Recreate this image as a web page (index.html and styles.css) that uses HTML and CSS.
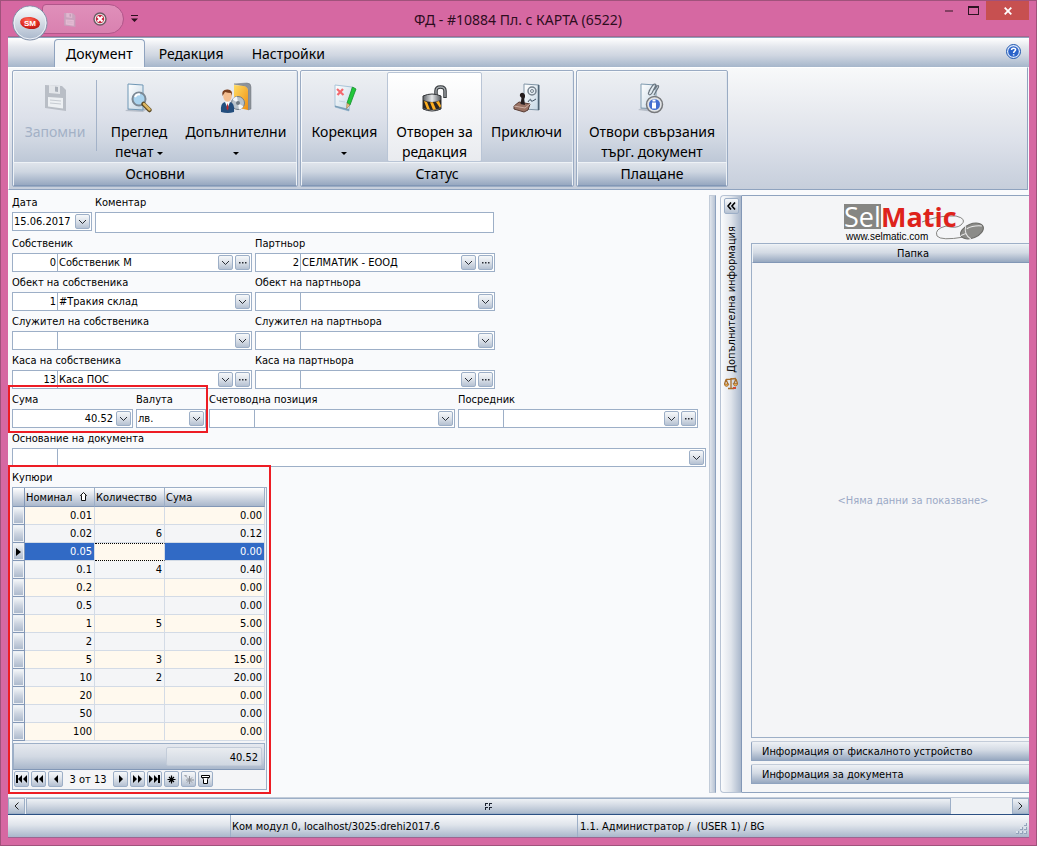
FILE: index.html
```
<!DOCTYPE html>
<html lang="bg">
<head>
  <meta charset="UTF-8">
  <meta name="viewport" content="width=device-width, initial-scale=1.0">
  <title>ФД - #10884 Пл. с КАРТА (6522)</title>
  <link rel="stylesheet" href="styles.css">
</head>
<body>

<!-- Shared symbols -->
<svg class="defs" aria-hidden="true">
  <defs>
    <linearGradient id="gSteel" x1="0" y1="0" x2="0" y2="1">
      <stop offset="0" stop-color="#fdfefe"/><stop offset="1" stop-color="#a9b7cb"/>
    </linearGradient>
    <linearGradient id="gPage" x1="0" y1="0" x2="1" y2="1">
      <stop offset="0" stop-color="#ffffff"/><stop offset="1" stop-color="#c3d6e4"/>
    </linearGradient>
    <linearGradient id="gDoor" x1="0" y1="0" x2="1" y2="1">
      <stop offset="0" stop-color="#ffdc62"/><stop offset="1" stop-color="#ee8f12"/>
    </linearGradient>
    <linearGradient id="gMetal" x1="0" y1="0" x2="1" y2="0">
      <stop offset="0" stop-color="#5c6064"/><stop offset="0.5" stop-color="#e6e8ea"/><stop offset="1" stop-color="#54585c"/>
    </linearGradient>
    <radialGradient id="gRed" cx="0.4" cy="0.3" r="0.8">
      <stop offset="0" stop-color="#ff6a5a"/><stop offset="0.6" stop-color="#e02a20"/><stop offset="1" stop-color="#a81410"/>
    </radialGradient>
    <symbol id="down" viewBox="0 0 9 6">
      <path d="M1 1 L4.500 4.500 L8 1" fill="none" stroke="#2a2e36" stroke-width="1"/>
    </symbol>
    <symbol id="dots" viewBox="0 0 8 2">
      <path d="M0 0h1.500v1.500h-1.500zM3 0h1.500v1.500h-1.500zM6 0h1.500v1.500h-1.500z" fill="#2a2e36"/>
    </symbol>
    <symbol id="floppy" viewBox="0 0 24 28">
      <path d="M2 2 L19 3 L23 7 V28 L2 25 Z" fill="#b9bec6"/>
      <path d="M6 2 L17 3 V11 L6 10 Z" fill="#e3e6ea"/>
      <path d="M12 3.500 L15 4 V9 L12 8.600 Z" fill="#aab0b9"/>
      <path d="M5 14 L20 15 V25.500 L5 23.500 Z" fill="#edf0f3"/>
      <path d="M7 17 L18 18 M7 20 L18 21" stroke="#c6cbd2" fill="none"/>
    </symbol>
  </defs>
</svg>

<header class="titlebar">
  <button class="app-button" aria-label="Меню">
    <svg width="36" height="36" viewBox="0 0 36 36">
      <circle cx="18" cy="18" r="17" fill="url(#gSteel)" stroke="#7f8da6"/>
      <circle cx="18" cy="18" r="16" fill="none" stroke="#eef2f8"/>
      <ellipse cx="18" cy="18" rx="10" ry="6" fill="url(#gRed)" transform="rotate(8 18 18)"/>
      <text x="18" y="21" class="app-text">SM</text>
    </svg>
  </button>
  <div class="quick">
    <button aria-label="Запомни"><svg width="13" height="15" class="faded"><use href="#floppy"/></svg></button>
    <button aria-label="Затвори документа">
      <svg width="14" height="14" viewBox="0 0 14 14">
        <circle cx="7" cy="7" r="6" fill="#e9e9e9" stroke="#6d5a64" stroke-width="1.400"/>
        <circle cx="7" cy="7" r="4.200" fill="#c92440"/>
        <path d="M4.500 4.500 L9.500 9.500 M9.500 4.500 L4.500 9.500" stroke="#fff" stroke-width="2"/>
      </svg>
    </button>
  </div>
  <button class="quick-more" aria-label="Още">
    <svg width="7" height="7" viewBox="0 0 7 7"><path d="M0 0h7v1H0zM0 3.500h7L3.500 7z" fill="#2c0f1e"/></svg>
  </button>
  <h1 class="title">ФД - #10884 Пл. с КАРТА (6522)</h1>
  <div class="window-buttons">
    <button aria-label="Минимизирай"><svg width="8" height="2"><path d="M0 0h8v2H0z" fill="#833f62"/></svg></button>
    <button aria-label="Максимизирай"><svg width="11" height="9" viewBox="0 0 11 9"><path d="M0 0h11v9H0zM1 2v6h9V2z" fill-rule="evenodd" fill="#2d1522"/></svg></button>
    <button class="close" aria-label="Затвори"><svg width="8" height="8" viewBox="0 0 8 8"><path d="M0.700 0.700 L7.300 7.300 M7.300 0.700 L0.700 7.300" stroke="#fff" stroke-width="1.800"/></svg></button>
  </div>
</header>

<main class="window">
  <nav class="tabs">
    <button class="tab active">Документ</button>
    <button class="tab">Редакция</button>
    <button class="tab">Настройки</button>
    <button class="help" aria-label="Помощ">
      <svg width="15" height="15" viewBox="0 0 15 15">
        <circle cx="7.500" cy="7.500" r="7" fill="#dce8fb" stroke="#1f56ae"/>
        <circle cx="7.500" cy="7.500" r="5.300" fill="#2b63c9"/>
        <path d="M5.500 6 C5.500 3.500 9.700 3.600 9.600 5.800 C9.500 7.200 7.600 7.200 7.600 9 M7.600 10.200 V11.500" fill="none" stroke="#fff" stroke-width="1.500"/>
      </svg>
    </button>
  </nav>

  <section class="ribbon">
    <div class="group group-main">
      <div class="group-body">
        <button class="tool save" disabled>
          <svg width="32" height="32" viewBox="0 0 32 32"><use href="#floppy" x="4" y="1" width="24" height="28"/></svg>
          <span>Запомни</span>
        </button>
        <div class="divider"></div>
        <button class="tool preview">
          <svg width="32" height="32" viewBox="0 0 32 32">
            <path d="M2 29 L8 25 L24 27 L20 30 Z" fill="#8b97a5" opacity="0.5"/>
            <path d="M5 2 L20 3 V28 L5 27 Z" fill="url(#gPage)" stroke="#6f97b5"/>
            <circle cx="16" cy="17" r="6.500" fill="#a9d3ee" stroke="#7b8894" stroke-width="2"/>
            <path d="M12 15 A4.500 4.500 0 0 1 17 12.500" fill="none" stroke="#fff" stroke-width="2"/>
            <path d="M20.500 22 L26.500 28" stroke="#5b4a25" stroke-width="4.500" stroke-linecap="round"/>
            <path d="M21 22 L26.500 27.500" stroke="#dcb660" stroke-width="2.500" stroke-linecap="round"/>
          </svg>
          <span>Преглед<br>печат <i class="caret"></i></span>
        </button>
        <button class="tool extra">
          <svg width="32" height="32" viewBox="0 0 32 32">
            <path d="M14 2 L27 1 Q31 1 31 5 V27 L28 28 V8 Q27 4 23 4 Z" fill="#8c9299" stroke="#70757c" stroke-width="0.500"/>
            <path d="M14 3 L24 4 Q28 5 28 9 V28 L14 25 Z" fill="url(#gDoor)"/>
            <circle cx="18" cy="21" r="6.500" fill="#b9c3cb" stroke="#707b85"/>
            <path d="M18 21 L12.500 17.500 A6.500 6.500 0 0 1 17 14.500 Z M18 21 L23.500 24.500 A6.500 6.500 0 0 1 19 27.500 Z" fill="#f4f7f9"/>
            <circle cx="18" cy="21" r="2" fill="#6f7a84"/>
            <path d="M1 30 Q0 21 5 20 L10 20 Q15 21 14 30 Q8 32 1 30 Z" fill="#234e7d"/>
            <path d="M5 20 L7.500 26 L10 20 Z" fill="#fff"/>
            <path d="M7.500 21 L8.700 26 L7.500 28.500 L6.400 26 Z" fill="#c22628"/>
            <ellipse cx="7.500" cy="14" rx="4.300" ry="5.800" fill="#f3be91"/>
            <path d="M2.500 14 Q1 7.500 7 7.500 Q13 7 12 14 L11 11 Q8 11 5 10 Z" fill="#7a4020"/>
          </svg>
          <span>Допълнителни<br><i class="caret"></i></span>
        </button>
      </div>
      <div class="group-title">Основни</div>
    </div>

    <div class="group group-status">
      <div class="group-body">
        <button class="tool fix">
          <svg width="32" height="32" viewBox="0 0 32 32">
            <path d="M6 3 L23 5 L20 29 L6 25 Z" fill="url(#gPage)" stroke="#a9c4d8"/>
            <path d="M6 25 L20 29 L20 27 L6 23.500 Z" fill="#7b9eb8"/>
            <path d="M8 7 L14.500 13 M14 7 L8.500 13" stroke="#f4696e" stroke-width="2.200"/>
            <path d="M10 19 l6 1" stroke="#c3d4e0"/>
            <path d="M23.500 5 L27 7 L21 23 L18 21 Z" fill="#22c83a" stroke="#119128" stroke-width="0.800"/>
            <path d="M18 21 L21 23 L17.500 26.500 Z" fill="#e6bd80" stroke="#8b6a35" stroke-width="0.500"/>
          </svg>
          <span>Корекция<br><i class="caret"></i></span>
        </button>
        <button class="tool open checked">
          <svg width="32" height="32" viewBox="0 0 32 32">
            <path d="M17 15 V9 Q17 5 21.500 5 Q26 5 26 9 V16" fill="none" stroke="#34383b" stroke-width="3.500"/>
            <path d="M17 14 V9 Q17 5 21.500 5 Q26 5 26 9 V15" fill="none" stroke="#a5aaae" stroke-width="1.300"/>
            <path d="M4 14 Q13 10 22 14 V27 Q13 31 4 27 Z" fill="url(#gMetal)" stroke="#303336"/>
            <path d="M4 18 Q13 22 22 18 V26 Q13 30 4 26 Z" fill="#2b2725"/>
            <path d="M5 19 L8 20 L11 27.500 L8 27 Z M11 20.300 L14 20.300 L17 27.300 L14 27.800 Z M17 20 L20 19 L22 24 L21 26 Z" fill="#ffaf20"/>
          </svg>
          <span>Отворен за<br>редакция</span>
        </button>
        <button class="tool finish">
          <svg width="32" height="32" viewBox="0 0 32 32">
            <path d="M13 2 L28 3 V28 L13 27 Z" fill="url(#gPage)" stroke="#8095a6"/>
            <path d="M27.500 3 V28" stroke="#4f6474" stroke-width="1.500"/>
            <circle cx="21" cy="9" r="4" fill="none" stroke="#75828d" stroke-width="1.500"/>
            <circle cx="21" cy="9" r="1.500" fill="none" stroke="#75828d"/>
            <path d="M17 20 Q20 15 20 19 Q21 20 25 17" fill="none" stroke="#3f5061"/>
            <path d="M3 24 L8 20 L19 22 L17 28 L13 30 L3 27 Z" fill="#9a7365" stroke="#573b33"/>
            <path d="M3 24 L14 26 L19 22" fill="none" stroke="#ceb0a4"/>
            <path d="M9.500 22 L10.500 16 Q8 14 9 12 Q12 9 14 13 Q14.500 15 13 17 L14 23 Z" fill="#251d1e"/>
          </svg>
          <span>Приключи</span>
        </button>
      </div>
      <div class="group-title">Статус</div>
    </div>

    <div class="group group-pay">
      <div class="group-body">
        <button class="tool linked">
          <svg width="32" height="32" viewBox="0 0 32 32">
            <path d="M2 28 L8 24 L22 28 L18 30 Z" fill="#8b97a5" opacity="0.500"/>
            <path d="M5 2 L20 3 V27 L5 26 Z" fill="url(#gPage)" stroke="#7f9bb0"/>
            <path d="M13 9 L17 3 Q19 1 20 3 L16 11 Q14 14 12.500 12 Q12 11 14 8 M18 8 L21 4 Q23 3 22.500 5 L18 13" fill="none" stroke="#69747d" stroke-width="1.200"/>
            <circle cx="18.500" cy="22.500" r="8" fill="#e2e4e6" stroke="#77797c" stroke-width="1.500"/>
            <circle cx="18.500" cy="22.500" r="5.500" fill="#426ed0"/>
            <path d="M16 20.500h4v6h-4zM16.500 17.500h3v2h-3z" fill="#fff"/>
          </svg>
          <span>Отвори свързания<br>търг. документ</span>
        </button>
      </div>
      <div class="group-title">Плащане</div>
    </div>
  </section>

  <div class="workspace">
    <form class="form">
      <div class="row">
        <div class="field w-date">
          <label for="date">Дата</label>
          <div class="box"><input id="date" value="15.06.2017"><button type="button" class="mini" aria-label="Календар"><svg width="9" height="6"><use href="#down"/></svg></button></div>
        </div>
        <div class="field w-comment">
          <label for="comment">Коментар</label>
          <div class="box tall"><input id="comment"></div>
        </div>
      </div>

      <div class="row">
        <div class="field">
          <label for="owner">Собственик</label>
          <div class="box"><input id="owner" class="code" value="0"><select aria-label="Собственик име"><option>Собственик М</option></select><span class="mini drop"><svg width="9" height="6"><use href="#down"/></svg></span><button type="button" class="mini" aria-label="Избор"><svg width="8" height="2"><use href="#dots"/></svg></button></div>
        </div>
        <div class="field">
          <label for="partner">Партньор</label>
          <div class="box"><input id="partner" class="code" value="2"><select aria-label="Партньор име"><option>СЕЛМАТИК - ЕООД</option></select><span class="mini drop"><svg width="9" height="6"><use href="#down"/></svg></span><button type="button" class="mini" aria-label="Избор"><svg width="8" height="2"><use href="#dots"/></svg></button></div>
        </div>
      </div>

      <div class="row">
        <div class="field">
          <label for="ownerSite">Обект на собственика</label>
          <div class="box"><input id="ownerSite" class="code" value="1"><select aria-label="Обект"><option>#Тракия склад</option></select><span class="mini drop"><svg width="9" height="6"><use href="#down"/></svg></span></div>
        </div>
        <div class="field">
          <label for="partnerSite">Обект на партньора</label>
          <div class="box"><input id="partnerSite" class="code"><select aria-label="Обект"><option></option></select><span class="mini drop"><svg width="9" height="6"><use href="#down"/></svg></span></div>
        </div>
      </div>

      <div class="row">
        <div class="field">
          <label for="ownerEmp">Служител на собственика</label>
          <div class="box"><input id="ownerEmp" class="code"><select aria-label="Служител"><option></option></select><span class="mini drop"><svg width="9" height="6"><use href="#down"/></svg></span></div>
        </div>
        <div class="field">
          <label for="partnerEmp">Служител на партньора</label>
          <div class="box"><input id="partnerEmp" class="code"><select aria-label="Служител"><option></option></select><span class="mini drop"><svg width="9" height="6"><use href="#down"/></svg></span></div>
        </div>
      </div>

      <div class="row">
        <div class="field">
          <label for="ownerCash">Каса на собственика</label>
          <div class="box"><input id="ownerCash" class="code" value="13"><select aria-label="Каса"><option>Каса ПОС</option></select><span class="mini drop"><svg width="9" height="6"><use href="#down"/></svg></span><button type="button" class="mini" aria-label="Избор"><svg width="8" height="2"><use href="#dots"/></svg></button></div>
        </div>
        <div class="field">
          <label for="partnerCash">Каса на партньора</label>
          <div class="box"><input id="partnerCash" class="code"><select aria-label="Каса"><option></option></select><span class="mini drop"><svg width="9" height="6"><use href="#down"/></svg></span><button type="button" class="mini" aria-label="Избор"><svg width="8" height="2"><use href="#dots"/></svg></button></div>
        </div>
      </div>

      <div class="row">
        <div class="row marked">
          <div class="field w-sum">
            <label for="sum">Сума</label>
            <div class="box"><input id="sum" class="number" value="40.52"><button type="button" class="mini" aria-label="Калкулатор"><svg width="9" height="6"><use href="#down"/></svg></button></div>
          </div>
          <div class="field w-currency">
            <label for="currency">Валута</label>
            <div class="box"><select id="currency"><option>лв.</option></select><span class="mini drop"><svg width="9" height="6"><use href="#down"/></svg></span></div>
          </div>
        </div>
        <div class="field w-account">
          <label for="account">Счетоводна позиция</label>
          <div class="box"><input id="account" class="code"><select aria-label="Позиция"><option></option></select><span class="mini drop"><svg width="9" height="6"><use href="#down"/></svg></span></div>
        </div>
        <div class="field">
          <label for="agent">Посредник</label>
          <div class="box"><input id="agent" class="code"><select aria-label="Посредник име"><option></option></select><span class="mini drop"><svg width="9" height="6"><use href="#down"/></svg></span><button type="button" class="mini" aria-label="Избор"><svg width="8" height="2"><use href="#dots"/></svg></button></div>
        </div>
      </div>

      <div class="row">
        <div class="field w-full">
          <label for="reason">Основание на документа</label>
          <div class="box"><input id="reason" class="code"><select aria-label="Основание"><option></option></select><span class="mini drop"><svg width="9" height="6"><use href="#down"/></svg></span></div>
        </div>
      </div>

      <div class="notes marked">
        <div class="notes-label">Купюри</div>
        <div class="grid">
          <table>
            <thead>
              <tr>
                <th class="ind"></th>
                <th class="c-nom">Номинал <svg width="7" height="9" viewBox="0 0 7 9"><path d="M1.500 8.500V3.500H0.500L3.500 0.500L6.500 3.500H5.500V8.500Z" fill="#fff" stroke="#111"/></svg></th>
                <th class="c-qty">Количество</th>
                <th class="c-sum">Сума</th>
              </tr>
            </thead>
            <tbody>
              <tr><td class="ind"></td><td>0.01</td><td></td><td>0.00</td></tr>
              <tr><td class="ind"></td><td>0.02</td><td>6</td><td>0.12</td></tr>
              <tr class="current"><td class="ind"><svg width="5" height="8" viewBox="0 0 5 8"><path d="M0 0L5 4L0 8z"/></svg></td><td>0.05</td><td class="edit"></td><td>0.00</td></tr>
              <tr><td class="ind"></td><td>0.1</td><td>4</td><td>0.40</td></tr>
              <tr><td class="ind"></td><td>0.2</td><td></td><td>0.00</td></tr>
              <tr><td class="ind"></td><td>0.5</td><td></td><td>0.00</td></tr>
              <tr><td class="ind"></td><td>1</td><td>5</td><td>5.00</td></tr>
              <tr><td class="ind"></td><td>2</td><td></td><td>0.00</td></tr>
              <tr><td class="ind"></td><td>5</td><td>3</td><td>15.00</td></tr>
              <tr><td class="ind"></td><td>10</td><td>2</td><td>20.00</td></tr>
              <tr><td class="ind"></td><td>20</td><td></td><td>0.00</td></tr>
              <tr><td class="ind"></td><td>50</td><td></td><td>0.00</td></tr>
              <tr><td class="ind"></td><td>100</td><td></td><td>0.00</td></tr>
            </tbody>
          </table>
          <div class="total"><span>40.52</span></div>
          <div class="navigator">
            <button type="button" class="mini" aria-label="Първи"><svg width="11" height="8" viewBox="0 0 11 8"><path d="M0 0h2v8H0zM6 0v8L2 4zM11 0v8L7 4z"/></svg></button>
            <button type="button" class="mini" aria-label="Предишна страница"><svg width="9" height="8" viewBox="0 0 9 8"><path d="M4 0v8L0 4zM9 0v8L5 4z"/></svg></button>
            <button type="button" class="mini" aria-label="Предишен"><svg width="4" height="8" viewBox="0 0 4 8"><path d="M4 0v8L0 4z"/></svg></button>
            <span class="count">3 от 13</span>
            <button type="button" class="mini" aria-label="Следващ"><svg width="4" height="8" viewBox="0 0 4 8"><path d="M0 0v8L4 4z"/></svg></button>
            <button type="button" class="mini" aria-label="Следваща страница"><svg width="9" height="8" viewBox="0 0 9 8"><path d="M0 0v8L4 4zM5 0v8L9 4z"/></svg></button>
            <button type="button" class="mini" aria-label="Последен"><svg width="11" height="8" viewBox="0 0 11 8"><path d="M0 0v8L4 4zM5 0v8L9 4zM9 0h2v8H9z"/></svg></button>
            <button type="button" class="mini" aria-label="Запази позиция"><svg width="9" height="9" viewBox="0 0 9 9"><path d="M4.500 0.500v8M0.500 4.500h8M2 2l5 5M7 2L2 7" stroke="#000" stroke-width="1.200"/></svg></button>
            <button type="button" class="mini" disabled aria-label="Към позиция"><svg width="10" height="9" viewBox="0 0 10 9"><path d="M5.500 1v8M2 5h8M3 2.500l5 5M8 2.500L3 7.500M0 0h2v2" fill="none" stroke="#8c9097"/></svg></button>
            <button type="button" class="mini" aria-label="Филтър"><svg width="9" height="9" viewBox="0 0 9 9"><path d="M0.500 0.500h8v2h-8zM1.500 2.500L2.500 4.500V8.500H6.500V4.500L7.500 2.500" fill="#fff" stroke="#000"/></svg></button>
          </div>
        </div>
      </div>
    </form>

    <div class="splitter"></div>

    <aside class="side">
      <div class="side-strip">
        <button class="mini expand" aria-label="Разгъни"><svg width="9" height="8" viewBox="0 0 9 8"><path d="M4 0.500L1 4L4 7.500M8 0.500L5 4L8 7.500" fill="none" stroke="#000" stroke-width="1.600"/></svg></button>
        <span class="side-title">Допълнителна информация</span>
        <svg width="14" height="13" viewBox="0 0 14 13">
          <path d="M2 2.500L12 1.500M7 1V11M4 11.500H10M2 2.500L0.500 7M2 2.500L4 7M12 2L10 6.500M12 2L13.500 6.500" fill="none" stroke="#a86d28" stroke-width="1.300"/>
          <path d="M0 7H5Q4 9.500 2.500 9.500Q1 9.500 0 7ZM9 6.500H14Q13 9 11.500 9Q10 9 9 6.500Z" fill="#e5a84e" stroke="#8d5720" stroke-width="0.600"/>
          <path d="M9 10h3v2h-3z" fill="#d24a35"/>
        </svg>
      </div>
      <div class="side-content">
        <svg class="logo" width="141" height="40" viewBox="0 0 141 40" role="img" aria-label="SelMatic">
          <path d="M0 1h37v25H0z" fill="#868683"/>
          <text x="0" y="24" class="logo-sel">Sel</text>
          <path d="M78 19 Q95 12 112 13 Q124 16 117 22 Q112 26 102 23 Q90 26 93 33 Q97 38 120 34" fill="none" stroke="#868683"/>
          <text x="37" y="24" class="logo-matic">Matic</text>
          <text x="2" y="37" class="logo-url">www.selmatic.com</text>
          <g transform="rotate(-22 128 28)">
            <ellipse cx="128" cy="28" rx="12" ry="7" fill="#8b8b88" stroke="#6c6c69"/>
            <path d="M124 21 Q119 28 124 35 M116 28 H121 M124 24 Q131 23 139 27" fill="none" stroke="#e9e9e9"/>
          </g>
        </svg>
        <div class="folder">
          <div class="folder-head">Папка</div>
          <div class="folder-empty">&lt;Няма данни за показване&gt;</div>
        </div>
        <button class="bar">Информация от фискалното устройство</button>
        <button class="bar">Информация за документа</button>
      </div>
    </aside>
  </div>

  <div class="scrollbar">
    <button aria-label="Наляво"><svg width="5" height="8" viewBox="0 0 5 8"><path d="M4.500 0.500L1 4L4.500 7.500" fill="none" stroke="#222"/></svg></button>
    <div class="thumb"><svg width="7" height="7" viewBox="0 0 7 7"><path d="M0 0h3v1H1v2H0zM4 0h3v1H5v2H4zM0 4h3v1H1v2H0zM4 4h3v1H5v2H4z" fill="#1a2230"/></svg></div>
    <div class="track"></div>
    <button aria-label="Надясно"><svg width="5" height="8" viewBox="0 0 5 8"><path d="M0.500 0.500L4 4L0.500 7.500" fill="none" stroke="#222"/></svg></button>
  </div>

  <footer class="status">
    <span class="status-first"></span>
    <span class="status-host">Ком модул 0, localhost/3025:drehi2017.6</span>
    <span class="status-user">1.1. Администратор /&nbsp; (USER 1) / BG</span>
    <svg width="11" height="11" viewBox="0 0 11 11"><path d="M8 0h3v3H8zM4 4h3v3H4zM8 4h3v3H8zM0 8h3v3H0zM4 8h3v3H4zM8 8h3v3H8z" fill="#93a3bb"/><path d="M8 0h2v2H8zM4 4h2v2H4zM8 4h2v2H8zM0 8h2v2H0zM4 8h2v2H4zM8 8h2v2H8z" fill="#dde4ed"/></svg>
  </footer>
</main>

</body>
</html>
```

FILE: styles.css
```
* {
  box-sizing: border-box;
}
body {
  margin: 0;
  height: 100vh;
  display: flex;
  flex-direction: column;
  padding: 0 7px 7px;
  background-color: #d668a2;
  border: 1px solid #a0527b;
  font-family: "DejaVu Sans Condensed", "DejaVu Sans", sans-serif;
  font-size: 11px;
  color: #000;
  overflow: hidden;
}
button, input, select {
  font: inherit;
  color: inherit;
  margin: 0;
  padding: 0;
  border: none;
  background: none;
}
svg {
  display: block;
  flex-shrink: 0;
}
.defs {
  position: absolute;
  width: 0;
  height: 0;
}

/* Title bar */
.titlebar {
  height: 35px;
  flex-shrink: 0;
  display: flex;
  align-items: flex-start;
  position: relative;
  font-family: "Noto Sans", sans-serif;
}
.app-button {
  position: absolute;
  left: 4px;
  top: 4px;
  z-index: 2;
}
.app-text {
  font-family: "Liberation Sans", sans-serif;
  font-size: 8px;
  font-weight: bold;
  fill: #fff;
  text-anchor: middle;
}
.quick {
  width: 82px;
  height: 30px;
  margin: 3px 0 0 34px;
  padding: 0 16px 0 20px;
  display: flex;
  align-items: center;
  justify-content: space-between;
  border: 1px solid #b1568a;
  border-radius: 4px 15px 15px 0;
  background: linear-gradient(#e08fba, #d981b0);
}
.faded {
  opacity: 0.5;
}
.quick-more {
  margin: 14px 0 0 7px;
}
.title {
  flex: 1;
  margin: 0 38px 0 0;
  line-height: 37px;
  font-size: 14px;
  font-weight: normal;
  text-align: center;
  color: #2d0d1e;
}
.window-buttons {
  display: flex;
}
.window-buttons button {
  width: 25px;
  height: 19px;
  display: flex;
  align-items: center;
  justify-content: center;
}
.window-buttons .close {
  width: 43px;
  background-color: #c75050;
}

/* Window body */
.window {
  flex: 1;
  min-height: 0;
  display: flex;
  flex-direction: column;
  border-top: 1px solid #a5668b;
  background-color: #f9fafc;
}

/* Tabs */
.tabs {
  height: 30px;
  flex-shrink: 0;
  display: flex;
  align-items: flex-end;
  padding-left: 46px;
  border-top: 1px solid #8fa3bf;
  background: linear-gradient(#ffffff, #e4e7ed 30%, #cfd6e1 60%, #a6b6cb);
  font-family: "Noto Sans", sans-serif;
  font-size: 14px;
}
.tab {
  height: 28px;
  padding: 0 14px;
}
.tab.active {
  padding: 0 11px;
  border: 1px solid #8fa3bf;
  border-bottom: none;
  border-radius: 4px 4px 0 0;
  background-color: #f4f6f8;
}
.help {
  margin: 0 8px 8px auto;
}

/* Ribbon */
.ribbon {
  flex-shrink: 0;
  display: flex;
  gap: 2px;
  margin-right: 1px;
  padding: 2px 3px;
  border: 1px solid #8fa3bf;
  border-top-color: #fff;
  border-left-color: #fff;
  background: linear-gradient(#f8f9fa, #e4e7ed 45%, #dde1ea 60%, #c6cedb);
  font-family: "Noto Sans", sans-serif;
  font-size: 14px;
}
.group {
  border: 1px solid #9aabc3;
  border-radius: 2px;
  background: linear-gradient(#edf0f3, #dde1ea 40%, #d0d7e2 60%, #a9b7cb);
  box-shadow: inset 1px 1px 0 #f7f9fb, inset -1px 0 0 #dfe6ee;
}
.group-main { width: 286px; }
.group-status { width: 274px; }
.group-pay { width: 152px; }
.group-body {
  height: 91px;
  display: flex;
  padding: 1px;
}
.group-title {
  height: 24px;
  line-height: 22px;
  text-align: center;
  border: 1px solid #eef2f6;
  border-bottom-color: #8297b6;
  background: linear-gradient(#dfe4eb, #ced6e1 40%, #97a8c0);
}
.tool {
  display: flex;
  flex-direction: column;
  align-items: center;
  padding-top: 9px;
  line-height: 20px;
  border: 1px solid transparent;
}
.tool svg {
  margin-bottom: 8px;
}
.tool span {
  white-space: nowrap;
}
.tool:disabled {
  color: #a3b1c6;
}
.save { width: 82px; }
.preview { width: 84px; }
.extra { width: 110px; }
.fix { width: 85px; }
.open { width: 95px; }
.finish { width: 89px; }
.linked { width: 148px; }
.tool.checked {
  height: 90px;
  border-color: #b9c5d6;
  border-radius: 2px;
  background: linear-gradient(#ffffff, #e9ebef);
}
.divider {
  width: 1px;
  margin: 8px 0 10px;
  background-color: #a3b2c8;
}
.caret {
  display: inline-block;
  vertical-align: middle;
  border: 3px solid transparent;
  border-top-color: #000;
  border-bottom: none;
}

/* Workspace */
.workspace {
  flex: 1;
  min-height: 0;
  display: flex;
  padding-top: 5px;
  overflow: hidden;
}
.form {
  width: 701px;
  flex-shrink: 0;
  margin-top: -3px;
  padding-left: 4px;
}
.row {
  display: flex;
  gap: 3px;
}
.field {
  width: 240px;
}
.field label, .notes-label {
  display: block;
  height: 20px;
  line-height: 22px;
  white-space: nowrap;
}
.w-date { width: 80px; }
.w-comment { width: 399px; }
.w-sum { width: 121px; }
.w-currency { width: 70px; }
.w-account { width: 246px; }
.w-full { width: 694px; }
.box {
  position: relative;
  height: 19px;
  display: flex;
  align-items: center;
  padding-right: 1px;
  border: 1px solid #9dafc7;
  background-color: #fff;
}
.box.tall {
  height: 21px;
}
.box input, .box select {
  flex: 1;
  min-width: 0;
  height: 17px;
  padding: 0 1px;
  appearance: none;
  outline: none;
}
.box .code {
  flex: none;
  width: 45px;
  text-align: right;
  border-right: 1px solid #9dafc7;
}
.box .number {
  text-align: right;
}
.mini {
  width: 15px;
  height: 16px;
  display: flex;
  flex-shrink: 0;
  align-items: center;
  justify-content: center;
  border: 1px solid #9dafc7;
  border-radius: 2px;
  background: linear-gradient(#f6f8fa, #dfe4eb 45%, #b5c1d2);
}
.box .mini {
  height: 15px;
  margin-left: 2px;
}
.drop {
  pointer-events: none;
}

/* Red frames around the important parts */
.marked {
  position: relative;
}
.marked::after {
  content: "";
  position: absolute;
  inset: -4px -2px -5px -4px;
  border: 2px solid #ed1c24;
  pointer-events: none;
}

/* Banknotes grid */
.notes {
  width: 255px;
}
.notes.marked::after {
  inset: -2px -4px -4px;
}
.grid {
  border: 1px solid #9dafc7;
  background-color: #f4f5f7;
}
.grid table {
  border-collapse: separate;
  border-spacing: 0;
  table-layout: fixed;
  width: 252px;
}
.grid th {
  height: 19px;
  padding: 0 1px;
  text-align: left;
  font-weight: normal;
  white-space: nowrap;
  border-right: 1px solid #9dafc7;
  border-bottom: 1px solid #8297b6;
  background: linear-gradient(#ffffff, #dde2ea 40%, #a9b7cb);
}
.grid th svg {
  display: inline-block;
  margin-left: 5px;
}
.grid td {
  height: 18px;
  padding: 0 2px;
  line-height: 16px;
  text-align: right;
  border-right: 1px solid #d3dbe6;
  border-bottom: 1px solid #d3dbe6;
}
.grid .ind {
  width: 12px;
  padding: 0 3px;
  border-right: 1px solid #8297b6;
}
.grid td.ind {
  border-bottom: 1px solid #8297b6;
  background: linear-gradient(#f8fafb, #ccd4e0 50%, #a9b7cb);
  box-shadow: inset 0 0 0 1px #eef1f5;
}
.c-nom { width: 70px; }
.c-qty { width: 70px; }
.c-sum { width: 100px; }
.grid tbody tr:nth-child(odd) {
  background-color: #fff9ee;
}
.grid tbody tr.current {
  background-color: #316ac5;
  color: #fff;
}
.grid .current .edit {
  background-color: #fff9ee;
  border-top: 1px dotted #000;
  border-bottom: 1px dotted #000;
}
.total {
  height: 27px;
  margin: 2px 1px 0 0;
  padding: 3px 2px 3px 0;
  display: flex;
  justify-content: flex-end;
  border: 1px solid #9dafc7;
  border-bottom-color: #8297b6;
  background: linear-gradient(#e6e9ef, #d2d9e3 50%, #a9b7cb);
}
.total span {
  width: 96px;
  padding-right: 3px;
  line-height: 19px;
  text-align: right;
  border: 1px solid #c3ccd9;
  border-radius: 2px;
  background: linear-gradient(#e9ecf0, #d0d7e1);
}
.navigator {
  display: flex;
  align-items: center;
  gap: 2px;
  padding: 1px 1px 2px;
}
.count {
  width: 46px;
  text-align: center;
  white-space: nowrap;
}

.splitter {
  width: 7px;
  flex-shrink: 0;
  margin-bottom: 4px;
  border: 1px solid #c3ccd9;
  border-right-color: #8fa3bf;
  background: linear-gradient(90deg, #e1e6ed, #b9c4d4);
}

/* Side panel */
.side {
  flex: 1;
  min-width: 0;
  display: flex;
  margin: 0 0 4px 4px;
}
.side-strip {
  width: 22px;
  flex-shrink: 0;
  display: flex;
  flex-direction: column;
  align-items: center;
  gap: 4px;
  padding-top: 2px;
  border: 1px solid #b7c3d4;
  border-right-color: #8297b6;
  border-radius: 4px 0 0 4px;
  background: linear-gradient(90deg, #fbfcfd, #dfe4eb 50%, #a9b7cb);
}
.expand {
  margin-bottom: 8px;
}
.side-title {
  writing-mode: vertical-rl;
  transform: rotate(180deg);
  white-space: nowrap;
}
.side-content {
  flex: 1;
  min-width: 0;
  display: flex;
  flex-direction: column;
  gap: 3px;
  padding: 7px 0 8px 9px;
  border-top: 1px solid #8fa3bf;
  border-bottom: 1px solid #8fa3bf;
  background-color: #f4f5f7;
}
.logo {
  margin-left: 93px;
  overflow: visible;
}
.logo-sel {
  font-family: "Open Sans", sans-serif;
  font-size: 27px;
  fill: #fff;
}
.logo-matic {
  font-family: "Open Sans", sans-serif;
  font-size: 27px;
  font-weight: bold;
  fill: #de231b;
}
.logo-url {
  font-family: "Liberation Sans", sans-serif;
  font-size: 10px;
}
/* the folder list is wider than the panel and runs off its right edge */
.folder {
  flex: 1;
  display: flex;
  flex-direction: column;
  margin: -3px -46px 0 0;
  border: 1px solid #9dafc7;
}
.folder-head {
  line-height: 17px;
  text-align: center;
  border: 1px solid #eef2f6;
  border-bottom-color: #8297b6;
  background: linear-gradient(#e9edf2, #d3dae4 45%, #97a8c0);
}
.folder-empty {
  flex: 1;
  display: flex;
  align-items: center;
  justify-content: center;
  color: #9ba9c6;
}
.bar {
  height: 20px;
  padding-left: 10px;
  text-align: left;
  border-left: 1px solid #8fa3bf;
  border-top: 1px solid #c3ccd9;
  border-bottom: 1px solid #8fa3bf;
  border-radius: 2px 0 0 0;
  background: linear-gradient(#eef1f5, #d3dae4 45%, #97a8c0);
}

/* Horizontal scroll bar */
.scrollbar {
  height: 17px;
  flex-shrink: 0;
  display: flex;
  gap: 1px;
  border-top: 1px solid #c3ccd9;
  background-color: #eef1f4;
}
.scrollbar button, .thumb {
  display: flex;
  align-items: center;
  justify-content: center;
  border: 1px solid #9dafc7;
  background: linear-gradient(#eef1f5, #d3dae4 45%, #adbbcd);
}
.scrollbar button {
  width: 17px;
}
.thumb {
  flex: 1;
}
.track {
  width: 59px;
}

/* Status bar */
.status {
  height: 24px;
  flex-shrink: 0;
  display: flex;
  line-height: 23px;
  border-top: 1px solid #2b5083;
  border-bottom: 1px solid #9c6590;
  background: linear-gradient(#f8f9fb, #dfe4eb 45%, #a9b7cb);
}
.status-first {
  width: 222px;
}
.status-host {
  width: 347px;
  padding-left: 1px;
  border-left: 1px solid #9dafc7;
}
.status-user {
  flex: 1;
  padding-left: 2px;
  border-left: 1px solid #9dafc7;
}
.status svg {
  align-self: flex-end;
  margin: 0 2px 3px 0;
}
```
